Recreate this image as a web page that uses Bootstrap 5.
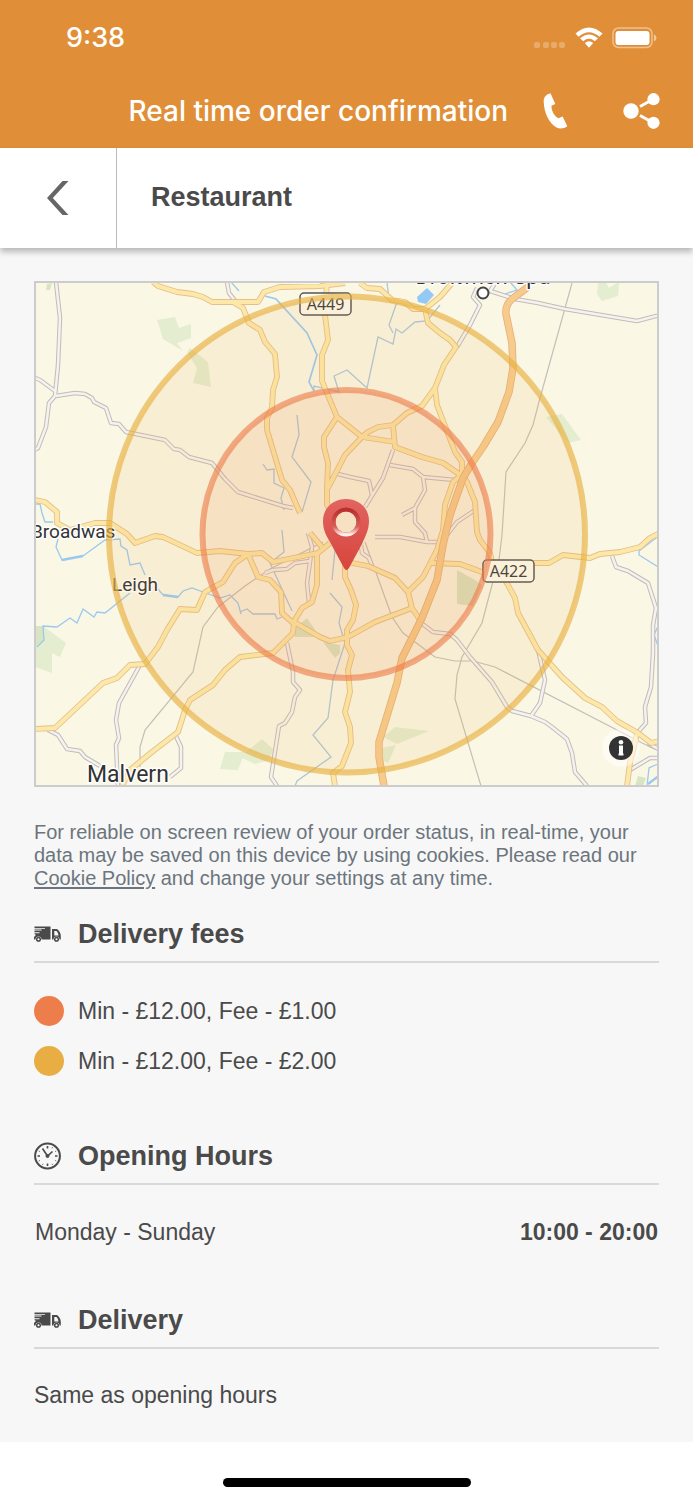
<!DOCTYPE html>
<html lang="en">
<head>
<meta charset="utf-8">
<meta name="viewport" content="width=device-width, initial-scale=1">
<title>Restaurant</title>
<link href="https://cdn.jsdelivr.net/npm/bootstrap@5.3.0/dist/css/bootstrap.min.css" rel="stylesheet">
<style>
  body { font-family: "Liberation Sans", Arial, sans-serif; font-size: 23px; line-height: 28px; color: #4a4a4a; background: #fff; }
  svg { display: block; }
  .app-head { background: #e08f38; color: #fff; font-family: Inter, sans-serif; }
  .status-line { height: 76px; padding: 0 36px 0 66px; }
  .clock-text { font-size: 27px; font-weight: 500; }
  .title-line { height: 72px; padding-right: 33px; padding-bottom: 3px; }
  .app-title { font-size: 28px; font-weight: 500; line-height: 36px; margin-right: 35px; }
  .title-line .btn { border: 0; padding: 0; color: #fff; }
  .phone-btn { margin-right: 55px; }
  .sub-head { height: 100px; background: #fff; box-shadow: 0 4px 6px rgba(0,0,0,.25); }
  .back-btn { width: 117px; border: 0; border-right: 1px solid #bbb; border-radius: 0; padding: 0; color: #666; }
  .sub-title { font-size: 27px; font-weight: 700; line-height: 32px; padding: 0 34px 2px; }
  .page-body { background: #f7f7f7; padding: 33px 34px; }
  .map-box { border: 2px solid #ccc; background: #faf7e5; }
  .map-info { right: 16px; bottom: 17px; border: 0; padding: 0; }
  .cookie-note { font-size: 20px; line-height: 23px; color: #6c757d; margin: 34px 0 16px; }
  .cookie-note a { color: inherit; text-underline-offset: 2px; }
  .section-head { height: 57px; border-bottom: 2px solid #d9d9d9; gap: 17px; }
  .section-head h2 { font-size: 27px; font-weight: 700; line-height: 32px; margin: 0; }
  .fee-list { margin: 33px 0 52px; gap: 20px; }
  .fee-list li { gap: 14px; }
  .fee-dot { width: 30px; height: 30px; border-radius: 50%; }
  .fee-near { background: #ed7d4b; }
  .fee-far { background: #e8ae43; }
  .hours-table { margin: 33px 0 46px; }
  .hours-table th, .hours-table td { padding: 0 1px; }
  .home-area { height: 58px; padding-bottom: 13px; }
  .home-bar { width: 248px; height: 9px; border-radius: 5px; background: #000; }
  .town { font-family: Roboto, sans-serif; fill: #333; stroke: #fff; stroke-width: 3px; paint-order: stroke; stroke-linejoin: round; }
  .shield-text { font-family: "Noto Sans", sans-serif; font-size: 16px; fill: #3a3a3a; text-anchor: middle; }
</style>
</head>
<body>
<header class="app-head">
  <div class="status-line d-flex align-items-center justify-content-between">
    <span class="clock-text">9:38</span>
    <svg width="123" height="22" viewBox="534 27 123 22" fill="#fff" aria-hidden="true">
      <g opacity=".25"><rect x="534" y="42" width="6" height="6" rx="2"/><rect x="543" y="42" width="6" height="6" rx="2"/><rect x="551" y="42" width="6" height="6" rx="2"/><rect x="559" y="42" width="6" height="6" rx="2"/></g>
      <path d="M575.5 33.5Q589 21.500 602.500 33.500L599.400 36.800Q589 27.500 578.600 36.800ZM580 38.300Q589 30.500 598 38.300L594.800 41.200Q589 36.500 583.200 41.200ZM584.800 43Q589 39.500 593.200 43L589 47.800Z"/>
      <rect x="613" y="28" width="39" height="19.500" rx="5.500" fill="none" stroke="#fff" stroke-opacity=".45" stroke-width="1.500"/>
      <rect x="615.500" y="31" width="34" height="14" rx="3"/>
      <path d="M654 34.500q2.500.8 2.500 3.500t-2.500 3.500z" opacity=".5"/>
    </svg>
  </div>
  <div class="title-line d-flex align-items-center justify-content-end">
    <h1 class="app-title mb-0 text-nowrap">Real time order confirmation</h1>
    <button type="button" class="btn phone-btn" aria-label="Call">
      <svg width="25" height="36" viewBox="0 0 25 36" fill="currentColor"><path d="M7.500.2 12.300 11 8.500 12.800C8.200 17.500 11.500 23.500 15.600 25.200L19.600 23.500 24.300 33.300C21 35.500 17.500 36.500 13.500 34.500 5.500 29.500 1 19.500.7 8.500.6 4 3.500 1 7.500.2Z"/></svg>
    </button>
    <button type="button" class="btn" aria-label="Share">
      <svg width="37" height="36" viewBox="0 0 37 36" fill="currentColor"><circle cx="8" cy="18" r="7.700"/><circle cx="30.500" cy="6.200" r="6.100"/><circle cx="30.500" cy="29.800" r="6.100"/><path d="m17 13.500 9-5M17 22.500l9 5" stroke="currentColor" stroke-width="3"/></svg>
    </button>
  </div>
</header>

<div class="sub-head d-flex align-items-stretch position-relative">
  <button type="button" class="btn back-btn d-flex align-items-center justify-content-center" aria-label="Back">
    <svg width="22" height="34" viewBox="0 0 22 34" fill="currentColor"><path d="M15.500 0H21.500L5.800 17 21.500 34H15.500L0 17Z"/></svg>
  </button>
  <div class="sub-title d-flex align-items-center">Restaurant</div>
</div>

<main class="page-body">
  <div class="map-box position-relative">
    <svg class="w-100 h-auto" viewBox="36 283 621 502" role="img" aria-label="Delivery area map">
      <defs>
        <g id="minorRoads">
          <path d="M56 282 60 318 58 365 55 396M35 378 40 380 55 391M55 396 49 403 46 427 38 448 33 451M56 396 75 393 85 394 92 398 94 402 106 408 111 423 119 424 126 432 165 440 174 449 180 450 189 457 212 463 225 479 238 492 283 506 293 508"/>
          <path d="M227 282 229 293 236 302M477 288 473 297 480 305 470 325 457 347M496 282 490 291 515 299 538 303 565 309 637 321 660 315"/>
          <path d="M393 450 383 478 365 507M372 495 369 481 350 477 338 474M390 465 413 469 423 477 455 480M423 477 425 490 415 508 402 515M415 508 415 522 425 533 427 542 438 542M375 537 400 537 427 542M475 510 457 522 447 535"/>
          <path d="M308 533 312 547 310 562 307 583 309 602M265 573 273 570 287 569 295 563 310 561M361 545 362 553 369 558 372 566M287 643 293 672 293 682 300 690 295 697 292 712 285 723 279 726 271 777 277 786"/>
          <path d="M140 665 119 703 116 720 119 738 116 745 118 786M175 734 181 747 181 768 170 777M48 730 58 735 67 749 80 751 85 757 100 766"/>
          <path d="M612 556 616 567 628 571 648 583 656 608 653 625 653 653 651 687 645 707 646 723 638 732M538 650 545 680 540 703 531 716M420 622 433 632 450 634 457 640 470 657 492 682 507 707 512 711 531 716 545 722 552 727 567 739 572 753 575 772 587 786M630 770 650 758H660M648 743 660 750"/>
        </g>
        <g id="mainRoads">
          <path d="M153 282 158 286 177 292 193 294 203 297 212 302H258L264 292 280 287 320 286 345 283M233 302 243 308 249 323 260 330 265 342 275 354 277 377 273 390 272 408 267 418V430L282 480 290 490 300 513"/>
          <path d="M327 283 325 315 328 340 322 355V381L337 417 362 437 395 442M337 417 324 437V447L328 463 327 488V505L333 515M362 437 345 455 328 488M362 437 368 432 378 427 393 425 395 447 422 457 443 463 462 476M393 425 407 413 422 406 435 388 444 365 456 347 450 340 440 333 428 323 425 309 440 297 452 283M435 388 437 405 455 452 462 462V475L467 482 475 502 477 532 480 540 490 553 492 562"/>
          <path d="M360 283 367 288 380 289 392 300 405 302 413 309H425M460 476 453 482 445 505 443 530 437 550 423 577 408 592"/>
          <path d="M35 500 45 502 57 512V523L70 530 95 523H110L127 534 135 543 155 536 163 537 197 553 220 551 248 554 262 553 273 562 318 553 330 543M35 729 55 728 103 683 117 678 130 665 145 664 158 647 167 630 180 609 197 610 205 592 223 582 235 563 248 554"/>
          <path d="M248 554 258 577 270 580 281 592 282 613 293 623 302 608 312 602 317 585V553M310 533 322 547M294 622 293 633 273 653 240 657 225 670 213 685 190 700 185 710 178 732 152 752 130 770 120 790M294 622 320 637 330 641 348 637 375 622 412 608"/>
          <path d="M345 560V577L351 590 356 605 353 620 347 630V645L352 655 348 670 350 692 345 712 350 727 351 743 342 766 333 773 335 786M347 562 368 566 395 578 408 592 412 608 420 620M430 563 460 564 482 572 500 571 533 563H549L563 555 590 558 600 554 620 552 640 547 650 538 660 533M500 571 508 585 515 598 518 613 538 650 562 677 585 698 602 707 617 721 638 733 651 743 660 741M637 734 630 763 627 786"/>
        </g>
        <path id="motorway" d="M528 287 512 299Q505 305 506 314L512 343 513 368 509 392 498 422 483 447 472 463 463 478 450 515 443 545 437 580 422 618 402 658 397 683 379 742V757L384 786"/>
        <linearGradient id="pinRed" x1="0" y1="0" x2="0" y2="1"><stop offset="0" stop-color="#e26460"/><stop offset=".5" stop-color="#dc544f"/><stop offset="1" stop-color="#d6463c"/></linearGradient>
        <linearGradient id="pinRim" x1="0" y1="0" x2="0" y2="1"><stop offset="0" stop-color="#b92f2b"/><stop offset=".7" stop-color="#d9605c"/><stop offset="1" stop-color="#fff0ee"/></linearGradient>
      </defs>
      <rect x="36" y="283" width="621" height="503" fill="#faf7e5"/>
      <g fill="#e4edcf">
        <path d="M157 320 175 317 179 328 191 324V338L177 343 183 351 163 339ZM190 348 208 362 211 387 193 383 197 368 187 352ZM598 283H606L609 288 617 283H619L618 296 602 301 597 294ZM546 417 562 414 581 440 568 443ZM35 627 43 626 66 643 60 657 52 653V673L35 667ZM225 752H245L238 770 220 769ZM262 739 273 749 270 760 255 764 240 757ZM383 737 395 727 429 731 397 744ZM382 748 396 745 388 763 382 760Z"/>
        <path fill="#d9e5c2" d="M293 630 307 618 320 637 295 637ZM323 642 340 645V653L335 658ZM457 570 475 580 482 585 473 606 457 604ZM638 776 646 778 643 786 635 786ZM36 626 43 626 44 640 36 647ZM47 284 52 283 50 290 46 290Z"/>
      </g>
      <g fill="none" stroke="#9ac9f0" stroke-width="1.300">
        <path stroke-width="1.700" d="M265 296 276 299 307 333 317 355 309 382 314 391"/>
        <path stroke="#adc6da" d="M314 391V386L339 392 334 376 347 370 367 388 378 337 393 344 396 329 402 333 415 322 427 321 440 305M387 283 389 298M397 302 389 325 393 333M297 415 299 435 292 457 311 482 302 512M263 464 267 470 274 469V483L284 488 281 498 284 510M282 530 284 552 270 563 292 611M240 612 247 609 253 614 275 614 277 619 282 617M335 550 332 580M330 593 342 607 339 623 345 643 333 680 328 718 313 735 331 757 297 781 295 786"/>
        <path d="M35 504H40L42 513 45 522H53M58 539 56 547 62 560 83 556 105 540 120 539 121 546 127 550 130 565 140 563 145 575M158 589 163 595 178 597 183 591 192 588 203 592 220 598 230 595 238 603 241 614M130 593 105 613 97 612 94 617 83 609 77 623 70 618 57 627 43 626 44 640 37 647M660 535 639 551V555L660 568M658 626 654 635 658 646M647 786 649 768 660 763M510 282 517 290 505 294M231 282 239 291"/>
        <path stroke-width="2.500" d="M62 560 83 556M163 595 178 597M648 784 660 775"/>
      </g>
      <path fill="#94c9f6" d="M417 297 427 288 434 295 426 304 418 302Z"/>
      <path fill="none" stroke="#c4bfb8" stroke-width="1.200" d="M572 283 540 398 533 425 525 443 506 472 502 535 499 560 492 585 482 623 462 657 457 675 455 699 481 786M365 542 392 617 403 633 435 657 455 661 473 661 495 667 650 747 660 751M140 767V747L145 730 193 672 203 627 218 607 245 586 270 569 323 542"/>
      <g fill="none" stroke-linejoin="round">
        <use href="#minorRoads" stroke="#c3bbb9" stroke-width="4.500"/>
        <use href="#minorRoads" stroke="#f5f3ef" stroke-width="2.500"/>
        <use href="#mainRoads" stroke="#e6bf8c" stroke-width="5.800"/>
        <use href="#mainRoads" stroke="#fce9a9" stroke-width="4"/>
        <use href="#motorway" stroke="#e6b27a" stroke-width="7.500"/>
        <use href="#motorway" stroke="#f7ca8d" stroke-width="5.800"/>
      </g>
      <circle cx="483" cy="293" r="5.500" fill="#fff" stroke="#444" stroke-width="2"/>
      <g fill="#fdfaee" stroke="#555" stroke-width="1.500"><rect x="300" y="293" width="51" height="22" rx="4"/><rect x="483" y="560" width="51" height="22" rx="4"/></g>
      <text class="shield-text" x="325.500" y="310">A449</text>
      <text class="shield-text" x="508.500" y="577">A422</text>
      <text class="town" x="31" y="538" font-size="19">Broadwas</text>
      <text class="town" x="112" y="591" font-size="19">Leigh</text>
      <text class="town" x="87" y="782" font-size="23">Malvern</text>
      <text class="town" x="483" y="284" font-size="22" text-anchor="middle">Droitwich Spa</text>
      <circle cx="347" cy="534.500" r="238" fill="#f0a838" fill-opacity=".1" stroke="#e8b040" stroke-opacity=".65" stroke-width="6"/>
      <circle cx="346.500" cy="534" r="144" fill="#ed7d4b" fill-opacity=".11" stroke="#ed7d4b" stroke-opacity=".62" stroke-width="6"/>
      <path fill="url(#pinRed)" fill-rule="evenodd" d="M346 499C359 499 369 508 369 521 369 530 365 537 362 544L349 568Q346.500 572 344 568L330 542C326 535 323 530 323 521 323 508 333 499 346 499ZM346 511.500A10.500 10.500 0 1 0 346 532.500 10.500 10.500 0 1 0 346 511.500Z"/>
      <circle cx="346" cy="522" r="12.500" fill="none" stroke="url(#pinRim)" stroke-width="4"/>
    </svg>
    <button type="button" class="btn map-info position-absolute" aria-label="Map information">
      <svg width="40" height="40" viewBox="0 0 40 40"><circle cx="20" cy="20" r="19" fill="#fff" fill-opacity=".5"/><circle cx="20" cy="20" r="12" fill="#333"/><circle cx="20" cy="14.200" r="2.300" fill="#fff"/><path fill="#fff" d="M18 17.500H22V25.500H22.500V27.500H17.500V25.500H18Z"/></svg>
    </button>
  </div>

  <p class="cookie-note">For reliable on screen review of your order status, in real-time, your data may be saved on this device by using cookies. Please read our <a href="#cookies">Cookie Policy</a> and change your settings at any time.</p>

  <svg class="d-none" aria-hidden="true">
    <symbol id="truck" viewBox="0 0 27 16">
      <path fill="#4a4a4a" fill-rule="evenodd" d="M.500.500H16.500V13.500H7.500A3 3 0 0 0 1.500 13.500H0V11L1.500 9.500V8.300H.5V7.300H5.500V6.200H.5V4.600H7.500V3.600H.5V2.800H11V1.900H.5ZM18 3H23Q26.800 6 26.800 10V13.500H25.500A3 3 0 0 0 19.500 13.500H18ZM20.300 5V9.500H24.500Q24.300 6.500 22.500 5Z"/>
      <g fill="#fff" stroke="#4a4a4a" stroke-width="1.500"><circle cx="4.500" cy="13.200" r="1.800"/><circle cx="22.500" cy="13.200" r="1.800"/></g>
    </symbol>
  </svg>

  <section>
    <div class="section-head d-flex align-items-center">
      <svg width="27" height="16" aria-hidden="true"><use href="#truck"/></svg>
      <h2>Delivery fees</h2>
    </div>
    <ul class="fee-list list-unstyled d-flex flex-column">
      <li class="d-flex align-items-center"><span class="fee-dot fee-near"></span>Min - £12.00, Fee - £1.00</li>
      <li class="d-flex align-items-center"><span class="fee-dot fee-far"></span>Min - £12.00, Fee - £2.00</li>
    </ul>
  </section>

  <section>
    <div class="section-head d-flex align-items-center">
      <svg width="27" height="28" viewBox="0 0 27 28" fill="none" stroke="#4a4a4a" aria-hidden="true"><circle cx="13.500" cy="14" r="12.400" stroke-width="2"/><path stroke-width="1.600" d="M13.500 4V6.500M13.500 21.500V24M3.500 14H6M21 14H23.500M8.500 6.500 13.500 14 18.500 9.500"/><path stroke-width="1" d="M18.500 5.300 18 6.200M22.200 9 21.300 9.500M22.200 19 21.300 18.500M18.500 22.700 18 21.800M8.500 22.700 9 21.800M4.800 19 5.700 18.500M4.800 9 5.700 9.500"/><circle cx="13.500" cy="14" r="1.500" fill="#4a4a4a"/></svg>
      <h2>Opening Hours</h2>
    </div>
    <table class="hours-table w-100">
      <tbody><tr><th scope="row" class="fw-normal">Monday - Sunday</th><td class="text-end fw-bold">10:00 - 20:00</td></tr></tbody>
    </table>
  </section>

  <section>
    <div class="section-head d-flex align-items-center">
      <svg width="27" height="16" aria-hidden="true"><use href="#truck"/></svg>
      <h2>Delivery</h2>
    </div>
    <p class="mt-3 mb-0 pt-3">Same as opening hours</p>
  </section>
</main>

<footer class="home-area d-flex align-items-end justify-content-center"><div class="home-bar"></div></footer>
<script src="https://cdn.jsdelivr.net/npm/bootstrap@5.3.0/dist/js/bootstrap.bundle.min.js"></script>
</body>
</html>
